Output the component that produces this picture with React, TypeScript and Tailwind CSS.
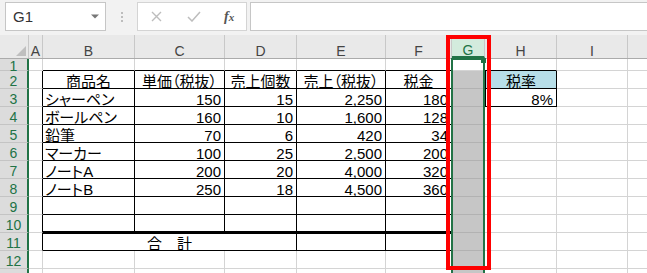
import React from 'react';

type Align = 'l' | 'c' | 'r';

const COLS: { k: string; w: string }[] = [
  { k: 'A', w: 'w-[14px]' },
  { k: 'B', w: 'w-[92px]' },
  { k: 'C', w: 'w-[90px]' },
  { k: 'D', w: 'w-[72px]' },
  { k: 'E', w: 'w-[89px]' },
  { k: 'F', w: 'w-[66px]' },
  { k: 'G', w: 'w-[33px]' },
  { k: 'H', w: 'w-[72px]' },
  { k: 'I', w: 'w-[71px]' },
  { k: 'J', w: 'w-[60px]' },
];

const DATA: Record<string, { t: string; a: Align }> = {
  B2: { t: '商品名', a: 'c' },
  C2: { t: '単価（税抜）', a: 'c' },
  D2: { t: '売上個数', a: 'c' },
  E2: { t: '売上（税抜）', a: 'c' },
  F2: { t: '税金', a: 'c' },
  H2: { t: '税率', a: 'c' },
  H3: { t: '8%', a: 'r' },
};

const ROWS_DATA: [string, string, string, string, string][] = [
  ['シャーペン', '150', '15', '2,250', '180'],
  ['ボールペン', '160', '10', '1,600', '128'],
  ['鉛筆', '70', '6', '420', '34'],
  ['マーカー', '100', '25', '2,500', '200'],
  ['ノートA', '200', '20', '4,000', '320'],
  ['ノートB', '250', '18', '4,500', '360'],
];
ROWS_DATA.forEach((row, i) => {
  const r = i + 3;
  DATA['B' + r] = { t: row[0], a: 'l' };
  DATA['C' + r] = { t: row[1], a: 'r' };
  DATA['D' + r] = { t: row[2], a: 'r' };
  DATA['E' + r] = { t: row[3], a: 'r' };
  DATA['F' + r] = { t: row[4], a: 'r' };
});

const ROWS = [1, 2, 3, 4, 5, 6, 7, 8, 9, 10, 11, 12, 13];

function alignCls(a: Align) {
  if (a === 'l') return 'justify-start pl-[2px]';
  if (a === 'r') return 'justify-end pr-[3px]';
  return 'justify-center';
}

function cellClasses(r: number, k: string) {
  const tableCol = 'BCDEF'.includes(k);
  const inTableRows = r >= 2 && r <= 11;
  const list: string[] = [];
  let bg = 'bg-white';
  let right = 'border-r border-r-[#D4D4D4]';
  let bottom = 'border-b border-b-[#D4D4D4]';

  if (k === 'G' && r >= 2) {
    bg = 'bg-[#C6C6C6]';
    right = 'border-r border-r-[#B2B2B2]';
    bottom = 'border-b border-b-[#B2B2B2]';
  }
  if (tableCol && inTableRows) right = 'border-r border-r-black';
  if (k === 'A' && inTableRows) right = 'border-r border-r-black';
  if (k === 'H' && (r === 2 || r === 3)) {
    right = 'border-r border-r-black';
    list.push('border-l border-l-black');
  }
  if (tableCol && r >= 1 && r <= 11) bottom = 'border-b border-b-black';
  if (tableCol && r === 10) bottom = 'border-b-2 border-b-black';
  if (tableCol && r === 11) list.push('border-t border-t-black');
  if (k === 'H' && r >= 1 && r <= 3) bottom = 'border-b border-b-black';
  if (k === 'H' && r === 2) bg = 'bg-[#B7DEE8]';
  list.push(bg, right, bottom);
  return list.join(' ');
}

function Cell({ r, k, w }: { r: number; k: string; w: string }) {
  const d = DATA[k + r];
  return (
    <div
      className={`${w} h-full shrink-0 flex items-end overflow-hidden whitespace-nowrap ${cellClasses(r, k)} ${
        d ? alignCls(d.a) : ''
      }`}
    >
      {d ? <span className="leading-[12px]">{d.t}</span> : null}
    </div>
  );
}

function SheetRow({ r }: { r: number }) {
  const h = r === 1 ? 'h-[12px]' : 'h-[18px]';
  return (
    <div className={`flex ${h}`}>
      <div className="w-[29px] h-full shrink-0 flex items-center justify-center bg-[#DCDCDC] border-r-2 border-r-[#217346] border-b border-b-[#C4C4C4] text-[14px] leading-[14px] text-[#217346] pt-[2px]">
        {r <= 12 ? r : ''}
      </div>
      {r === 11 ? (
        <>
          <Cell r={r} k="A" w="w-[14px]" />
          <div className="w-[254px] h-full shrink-0 flex items-end justify-center whitespace-nowrap bg-white border-r border-r-black border-b border-b-black border-t border-t-black">
            <span className="leading-[12px]">合　計</span>
          </div>
          {COLS.slice(4).map((c) => (
            <Cell key={c.k} r={r} k={c.k} w={c.w} />
          ))}
        </>
      ) : (
        COLS.map((c) => <Cell key={c.k} r={r} k={c.k} w={c.w} />)
      )}
    </div>
  );
}

export default function App() {
  return (
    <div className="w-[647px] h-[273px] overflow-hidden bg-white relative text-black text-[15px] [font-family:'Liberation_Sans','Noto_Sans_CJK_JP',sans-serif] [font-feature-settings:'palt']">
      {/* Formula bar */}
      <div className="h-[35px] bg-[#F2F2F2] flex items-start pt-[2px]">
        <div className="ml-[5px] w-[101px] h-[29px] shrink-0 bg-white border border-[#C6C6C6] flex items-center pl-[7px] pr-[6px] text-[15px] text-[#333333]">
          <span className="leading-[15px]">G1</span>
          <svg className="ml-auto" width="8" height="5" viewBox="0 0 8 5">
            <path d="M0 0.5H8L4 4.5Z" fill="#777777" />
          </svg>
        </div>
        <div className="w-[31px] h-[29px] shrink-0 flex flex-col items-center justify-center gap-[2px]">
          <div className="w-[2px] h-[2px] bg-[#BDBDBD]" />
          <div className="w-[2px] h-[2px] bg-[#BDBDBD]" />
          <div className="w-[2px] h-[2px] bg-[#BDBDBD]" />
        </div>
        <div className="w-[110px] h-[29px] shrink-0 bg-white border border-[#D4D4D4] relative flex items-center">
          <svg className="ml-[13px]" width="11" height="11" viewBox="0 0 11 11">
            <path d="M1 1L10 10M10 1L1 10" stroke="#BDBDBD" strokeWidth="1.4" />
          </svg>
          <svg className="ml-[25px]" width="14" height="11" viewBox="0 0 14 11">
            <path d="M1 6L5 10L13 1" stroke="#BDBDBD" strokeWidth="1.5" fill="none" />
          </svg>
          <span className="ml-[23px] italic font-bold text-[#555555] [font-family:'Liberation_Serif',serif] text-[14px] leading-[14px]">
            f<span className="text-[11px]">x</span>
          </span>
        </div>
        <div className="ml-[3px] flex-1 h-[29px] bg-white border border-[#C6C6C6] border-r-0" />
      </div>

      {/* Column headers */}
      <div className="flex h-[24px] bg-[#E9E9E9] border-b border-b-[#ABABAB] text-[14px] text-[#444444]">
        <div className="w-[29px] h-full shrink-0 border-r border-r-[#C8C8C8] flex items-end justify-end pr-[2px] pb-[2px]">
          <svg width="10" height="10" viewBox="0 0 10 10">
            <path d="M10 0V10H0Z" fill="#BFBFBF" />
          </svg>
        </div>
        {COLS.map((c) =>
          c.k === 'G' ? (
            <div
              key={c.k}
              className={`${c.w} h-full shrink-0 bg-[#D3EBDD] border-b-2 border-b-[#217346] border-r border-r-[#C8C8C8] flex items-end justify-center text-[#217346]`}
            >
              <span className="leading-[12px]">G</span>
            </div>
          ) : (
            <div
              key={c.k}
              className={`${c.w} h-full shrink-0 border-r border-r-[#C8C8C8] flex items-end justify-center`}
            >
              <span className="leading-[12px] translate-y-[-1px]">{c.k === 'J' ? '' : c.k}</span>
            </div>
          )
        )}
      </div>

      {/* Rows */}
      {ROWS.map((r) => (
        <SheetRow key={r} r={r} />
      ))}

      {/* Selection outline */}
      <div className="absolute left-[451px] top-[58px] w-[34px] h-[230px] border-2 border-[#217346]" />
      <div className="absolute left-[481px] top-[58px] w-[5px] h-[5px] bg-[#217346]" />

      {/* Red highlight box */}
      <div className="absolute left-[446px] top-[35px] w-[45px] h-[235px] border-4 border-[#FF0000]" />
    </div>
  );
}
